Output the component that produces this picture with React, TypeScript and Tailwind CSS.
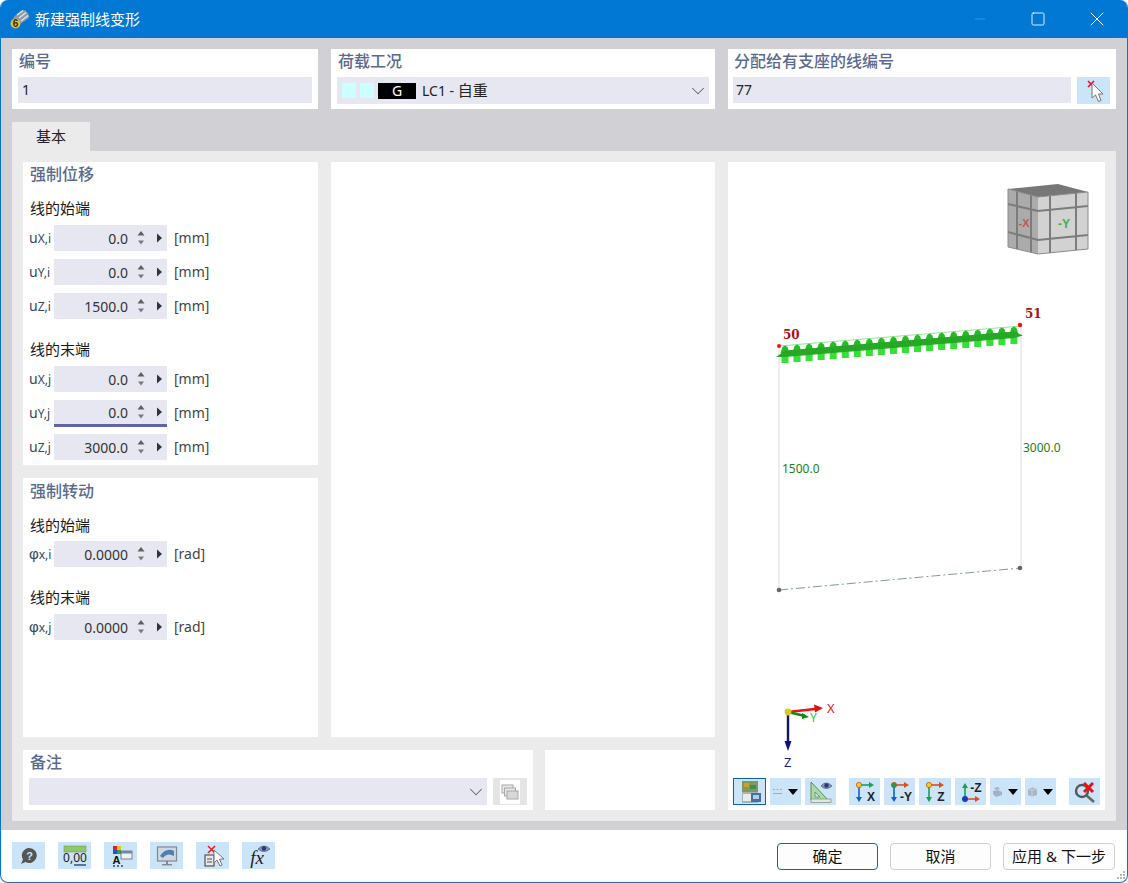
import type { ReactNode } from "react";
import { ChevronDown, Minus, Square, X } from "lucide-react";

const cardTitle = "h-6 leading-6 text-[16px] font-medium text-[#5a6a8e]";
const subTitle = "h-5 leading-5 text-[15px] text-[#1a1a1a]";

function Spinner() {
  return (
    <div className="flex items-center ml-auto shrink-0">
      <svg width="10" height="18" viewBox="0 0 10 18" className="mr-[10px]">
        <path d="M5 2 8.500 6.500 1.500 6.500Z" fill="#5f5f5f" />
        <path d="M5 15.500 8 11.500 2 11.500Z" fill="#7a7a7a" />
      </svg>
      <svg width="7" height="10" viewBox="0 0 7 10" className="mr-[4px] mb-[1px]">
        <path d="M1 0.500 6 5 1 9.500Z" fill="#333" />
      </svg>
    </div>
  );
}

function NumRow({
  sym,
  sub,
  value,
  unit,
  focused,
}: {
  sym: string;
  sub: string;
  value: string;
  unit: string;
  focused?: boolean;
}) {
  return (
    <div className="flex items-start h-[26px]">
      <div className="w-[25px] h-[26px] leading-[26px] text-[14px] text-[#33475f] whitespace-nowrap overflow-visible">
        <span className={sym === "φ" ? "font-['Liberation_Sans',sans-serif] text-[15px]" : ""}>{sym}</span>
        <span className="text-[12px]">{sub}</span>
      </div>
      <div
        className={`w-[113px] flex items-center bg-[#e6e7f1] ${
          focused ? "h-[27px] border-b-[3px] border-[#6264a7]" : "h-[26px]"
        }`}
      >
        <span className="w-[74px] text-right text-[14px] text-[#333] pt-[1px]">{value}</span>
        <Spinner />
      </div>
      <div className="ml-[7px] h-[26px] leading-[26px] text-[14px] text-[#444]">{unit}</div>
    </div>
  );
}

function Btn({ w, active, children }: { w: string; active?: boolean; children: ReactNode }) {
  return (
    <div
      className={`${w} h-[27px] shrink-0 flex items-center justify-center ${
        active ? "bg-[#cce4f7] border border-[#0a64a8]" : "bg-[#cce4f7]"
      }`}
    >
      {children}
    </div>
  );
}

function DropArrow() {
  return (
    <svg width="10" height="6" viewBox="0 0 10 6" className="ml-[6px]">
      <path d="M0 0H10L5 6Z" fill="#000" />
    </svg>
  );
}

function AxisIcon({
  top,
  arrow1,
  arrow2,
  label,
}: {
  top: string;
  arrow1: string;
  arrow2: string;
  label: string;
}) {
  return (
    <svg width="26" height="24" viewBox="0 0 26 24">
      <line x1="7" y1="5" x2="18" y2="5" stroke={arrow1} strokeWidth="1.600" />
      <path d="M17 2 22 5 17 8Z" fill={arrow1} />
      <line x1="7" y1="5" x2="7" y2="18" stroke={arrow2} strokeWidth="1.600" />
      <path d="M4 17 7 22 10 17Z" fill={arrow2} />
      <circle cx="7" cy="5" r="2.600" fill={top} stroke="#c05010" strokeWidth="0.800" />
      <text x="19" y="21" textAnchor="middle" fontSize="12" fontWeight="700" fontFamily="Liberation Sans Narrow, Liberation Sans" fill="#222">
        {label}
      </text>
    </svg>
  );
}

function ToolBar() {
  return (
    <div className="flex pl-[5px] h-[27px]">
      <Btn w="w-[33px]" active>
        <svg width="26" height="24" viewBox="0 0 26 24">
          <rect x="5" y="1" width="16" height="11" fill="#7f9a5a" />
          <rect x="7" y="3" width="5" height="4" fill="#c8a030" />
          <rect x="13" y="5" width="6" height="4" fill="#3f8f50" />
          <rect x="5" y="12" width="16" height="11" fill="#a9b0b8" />
          <rect x="6" y="14" width="14" height="7" fill="#e8ecef" />
          <rect x="14" y="13" width="10" height="9" fill="#3f6fa8" />
          <rect x="16" y="15" width="6" height="4" fill="#b7cbe0" />
        </svg>
      </Btn>
      <Btn w="w-[31px] ml-[4px]">
        <svg width="9" height="8" viewBox="0 0 9 8">
          <path d="M0 1.500H2M3.500 1.500H5.500M7 1.500H9" stroke="#e58aa8" strokeWidth="1" />
          <path d="M0 5.500H9" stroke="#e58aa8" strokeWidth="1" />
        </svg>
        <DropArrow />
      </Btn>
      <Btn w="w-[31px] ml-[4px]">
        <svg width="26" height="24" viewBox="0 0 26 24">
          <path d="M3 2 20 20H3Z" fill="#a8dca0" stroke="#5e8a60" strokeWidth="1" />
          <path d="M7 12 12 17H7Z" fill="#cce4f7" stroke="#5e8a60" strokeWidth="0.800" />
          <rect x="3" y="19" width="20" height="3.500" fill="#e2e6e0" stroke="#7c8a7c" strokeWidth="0.700" />
          <path d="M13 6Q18 0 24 6Q18 11 13 6Z" fill="#8098c8" stroke="#4a5470" strokeWidth="0.700" />
          <circle cx="18.500" cy="5.500" r="2.200" fill="#303a70" />
        </svg>
      </Btn>
      <Btn w="w-[31px] ml-[13px]">
        <AxisIcon top="#f5d020" arrow1="#1aa060" arrow2="#1560c8" label="X" />
      </Btn>
      <Btn w="w-[31px] ml-[4px]">
        <AxisIcon top="#18a050" arrow1="#d8501a" arrow2="#1560c8" label="-Y" />
      </Btn>
      <Btn w="w-[32px] ml-[4px]">
        <AxisIcon top="#f5d020" arrow1="#d8501a" arrow2="#18a050" label="Z" />
      </Btn>
      <Btn w="w-[31px] ml-[4px]">
        <svg width="26" height="24" viewBox="0 0 26 24">
          <line x1="7" y1="19" x2="7" y2="7" stroke="#18a050" strokeWidth="1.600" />
          <path d="M4 8 7 3 10 8Z" fill="#18a050" />
          <line x1="7" y1="19" x2="18" y2="19" stroke="#d8501a" strokeWidth="1.600" />
          <path d="M17 16 22 19 17 22Z" fill="#d8501a" />
          <circle cx="7" cy="19" r="3" fill="#1040c0" />
          <text x="18" y="12" textAnchor="middle" fontSize="12" fontWeight="700" fontFamily="Liberation Sans Narrow, Liberation Sans" fill="#222">
            -Z
          </text>
        </svg>
      </Btn>
      <Btn w="w-[31px] ml-[4px]">
        <svg width="9" height="10" viewBox="0 0 9 10">
          <path d="M1 1 5 0 7 2 3 3Z" fill="#a3b1c6" />
          <path d="M0 4 5 3 9 5 9 8 3 10 0 7Z" fill="#a3b1c6" />
        </svg>
        <DropArrow />
      </Btn>
      <Btn w="w-[31px] ml-[4px]">
        <svg width="9" height="10" viewBox="0 0 9 10">
          <path d="M0 2 5 0.500 9 2 9 8 4 9.500 0 8Z" fill="#aab4c6" />
          <path d="M4 3V9.500M0 2 4 3 9 2" stroke="#d5dce8" strokeWidth="0.700" fill="none" />
        </svg>
        <DropArrow />
      </Btn>
      <Btn w="w-[31px] ml-[13px]">
        <svg width="26" height="24" viewBox="0 0 26 24">
          <circle cx="10" cy="11" r="6" fill="none" stroke="#555" strokeWidth="2.400" />
          <path d="M14.500 15.500 22 22" stroke="#666" strokeWidth="2.600" />
          <path d="M12 3 21 12M21 3 12 12" stroke="#ee1111" strokeWidth="3" />
        </svg>
      </Btn>
    </div>
  );
}

function ModelView() {
  const arrows = Array.from({ length: 20 }, (_, i) => {
    const x = 785 + i * 12.05;
    return { x, y: 352 - (x - 785) * 0.083 };
  });
  return (
    <svg width="377" height="616" viewBox="728 162 377 616" className="block">
      {/* view cube */}
      <path d="M1008 189 1058 184 1088 192 1038 197Z" fill="#777777" />
      <path d="M1008 189 1038 197 1038 254 1008 247Z" fill="#ababab" />
      <path d="M1038 197 1088 192 1088 249 1038 254Z" fill="#d2d2d2" />
      <path
        d="M1008 204 1038 211 1088 206M1008 232 1038 240 1088 235M1017 191V249M1031 195V252M1050 196V253M1076 193V250"
        stroke="#7c7c7c"
        strokeWidth="2"
        fill="none"
      />
      <path d="M1008 189 1038 197 1088 192V249L1038 254 1008 247Z" stroke="#8a8a8a" strokeWidth="1" fill="none" />
      <text x="1024" y="227" textAnchor="middle" fontSize="11" fontWeight="700" fontFamily="Liberation Sans" fill="#c0555c">
        -X
      </text>
      <text x="1064" y="228" textAnchor="middle" fontSize="12" fontWeight="700" fontFamily="Liberation Sans" fill="#3fb04f">
        -Y
      </text>

      {/* supported line */}
      <line x1="779" y1="347" x2="779" y2="590" stroke="#dcdcdc" />
      <line x1="1021" y1="325" x2="1021" y2="568" stroke="#dcdcdc" />
      <line x1="779" y1="590" x2="1021" y2="568" stroke="#7f9f84" strokeDasharray="9 3 2 3" />
      <circle cx="779" cy="590" r="2.300" fill="#666" />
      <circle cx="1020" cy="568" r="2.300" fill="#666" />

      {/* imposed deformation load */}
      <line x1="779" y1="346" x2="1021" y2="326" stroke="#8cec8c" strokeWidth="1.200" />
      {arrows.map((a) => (
        <g key={a.x}>
          <rect x={a.x - 3.5} y={a.y} width="7" height="11" fill="#36e036" />
          <path d={`M${a.x - 4.5} ${a.y + 1} ${a.x - 2.5} ${a.y - 5} ${a.x} ${a.y - 6.5} ${a.x + 2.5} ${a.y - 5} ${a.x + 4.5} ${a.y + 1}Z`} fill="#28ba28" />
        </g>
      ))}
      <path d="M776 357 785 350.500 1014 331.500 1023 335.500 1014 338 785 357Z" fill="#26a826" />
      <circle cx="779" cy="346" r="2" fill="#ff1010" />
      <circle cx="1020" cy="325" r="2.200" fill="#ff1010" />
      <text x="783" y="339" fontSize="12" fontWeight="700" fontFamily="DejaVu Serif" fill="#b01010">
        50
      </text>
      <text x="1025" y="318" fontSize="12" fontWeight="700" fontFamily="DejaVu Serif" fill="#b01010">
        51
      </text>
      <text x="782" y="473" fontSize="12" fontFamily="Noto Sans" fill="#1a7f1a">
        1500.0
      </text>
      <text x="1023" y="452" fontSize="12" fontFamily="Noto Sans" fill="#1a7f1a">
        3000.0
      </text>

      {/* coordinate axes */}
      <line x1="788" y1="712" x2="788" y2="742" stroke="#10107f" strokeWidth="2.400" />
      <path d="M784.500 741 788 751 791.500 741Z" fill="#10107f" />
      <line x1="788" y1="712" x2="815" y2="709" stroke="#ee1111" strokeWidth="2.400" />
      <path d="M814 704.500 823 708 815 712.500Z" fill="#dd1111" />
      <line x1="788" y1="712" x2="805" y2="716" stroke="#108a10" strokeWidth="2.800" />
      <path d="M802 713 809 717 802 719Z" fill="#108a10" />
      <circle cx="788" cy="712" r="3.400" fill="#d8c820" />
      <text x="827" y="713" fontSize="13" fontFamily="Noto Sans" fill="#ee1111">
        X
      </text>
      <text x="810" y="722" fontSize="12" fontFamily="Noto Sans" fill="#22cc44">
        Y
      </text>
      <text x="784" y="767" fontSize="13" fontFamily="Noto Sans" fill="#1a1a80">
        Z
      </text>
    </svg>
  );
}

function FooterIcons() {
  return (
    <div className="flex gap-[13px]">
      <Btn w="w-[33px]">
        <svg width="22" height="22" viewBox="0 0 22 22">
          <path d="M11 3A7.500 7.500 0 1 1 7.500 17L3 19 5 14.500A7.500 7.500 0 0 1 11 3Z" fill="#555" />
          <text x="11.500" y="14.500" textAnchor="middle" fontSize="11" fontWeight="700" fontFamily="Liberation Sans" fill="#cce4f7">
            ?
          </text>
        </svg>
      </Btn>
      <Btn w="w-[33px]">
        <svg width="28" height="24" viewBox="0 0 28 24">
          <rect x="3" y="2" width="22" height="6" fill="#8fc86a" stroke="#6a9a50" strokeWidth="0.600" />
          <text x="14" y="18" textAnchor="middle" fontSize="12" fontFamily="Noto Sans" fill="#222">
            0,00
          </text>
          <line x1="13" y1="21" x2="25" y2="21" stroke="#2a4f90" strokeWidth="1.600" />
        </svg>
      </Btn>
      <Btn w="w-[33px]">
        <svg width="26" height="24" viewBox="0 0 26 24">
          <rect x="5" y="2" width="4" height="4" fill="#e02020" />
          <rect x="9" y="2" width="4" height="4" fill="#f0c020" />
          <rect x="5" y="6" width="4" height="4" fill="#2050d0" />
          <rect x="9" y="6" width="4" height="4" fill="#30a030" />
          <rect x="13" y="7" width="11" height="8" fill="#eef2f6" stroke="#667" strokeWidth="0.800" />
          <rect x="13" y="7" width="11" height="2.500" fill="#6f87a8" />
          <text x="8.500" y="20" textAnchor="middle" fontSize="11" fontWeight="700" fontFamily="Liberation Sans" fill="#111">
            A
          </text>
          <path d="M5 22H7M9 22H11M13 22H15" stroke="#444" strokeWidth="1.600" />
        </svg>
      </Btn>
      <Btn w="w-[33px]">
        <svg width="24" height="24" viewBox="0 0 24 24">
          <rect x="2.500" y="3" width="19" height="14" fill="#cfd8e2" stroke="#808890" strokeWidth="1.200" />
          <path d="M5 12Q11 3 19 7L19 12Q12 8 8 14Z" fill="#4f7eb5" />
          <rect x="11" y="17" width="2" height="3" fill="#808890" />
          <rect x="7" y="20" width="10" height="1.400" fill="#808890" />
        </svg>
      </Btn>
      <Btn w="w-[33px]">
        <svg width="26" height="24" viewBox="0 0 26 24">
          <path d="M8 2 15 9M15 2 8 9" stroke="#ee2222" strokeWidth="1.600" />
          <rect x="5" y="11" width="9" height="11" fill="#e8e8e8" stroke="#555" strokeWidth="1.200" />
          <path d="M7 15H12M7 18H12" stroke="#555" strokeWidth="1" />
          <path d="M14 6 14 19 17 16 20 22 22 21 19.500 15 24 15Z" fill="#fff" stroke="#777" strokeWidth="1" />
        </svg>
      </Btn>
      <Btn w="w-[33px]">
        <svg width="28" height="26" viewBox="0 0 28 26">
          <text x="12" y="21" textAnchor="middle" fontSize="19" fontStyle="italic" fontFamily="Liberation Serif" fill="#222">
            fx
          </text>
          <path d="M13 6Q19 0 25 6Q19 11 13 6Z" fill="#8098c8" stroke="#4a5470" strokeWidth="0.700" />
          <circle cx="19" cy="5.500" r="2.200" fill="#303a70" />
        </svg>
      </Btn>
    </div>
  );
}

export default function App() {
  return (
    <div className="w-[1128px] h-[883px] flex flex-col overflow-hidden rounded-lg border-x border-b border-[#0078d4] bg-white font-['Noto_Sans','Noto_Sans_CJK_SC',sans-serif]">
      {/* title bar */}
      <div className="h-[38px] shrink-0 -mx-px flex items-center bg-[#0078d4] text-white">
        <svg width="20" height="20" viewBox="0 0 20 20" className="ml-[10px]">
          <rect x="4" y="3.500" width="15" height="10" rx="3.500" fill="#8d99aa" transform="rotate(-35 11 8.500)" />
          <path d="M7 6 13 1.500M9 9 16 3.500M11 12 18 6.500" stroke="#e4e8ee" strokeWidth="1.300" />
          <circle cx="5.500" cy="14.500" r="5" fill="#dcbc40" />
          <text x="5.500" y="18" textAnchor="middle" fontSize="10" fontWeight="700" fontFamily="Liberation Sans" fill="#3a3010">
            6
          </text>
        </svg>
        <span className="ml-[5px] text-[15px]">新建强制线变形</span>
        <div className="ml-auto flex items-center">
          <Minus className="w-[16px] h-[16px] text-[#4aa3e4] mr-[42px]" strokeWidth={1} />
          <Square className="w-[16px] h-[16px] mr-[39px]" strokeWidth={1.3} />
          <X className="w-[24px] h-[24px] mr-[19px]" strokeWidth={1} />
        </div>
      </div>

      {/* dialog body */}
      <div className="h-[792px] shrink-0 bg-[#d1d0d5] pl-[11px] pr-[11px] pt-[11px]">
        <div className="flex gap-[13px] h-[60px]">
          <div className="w-[306px] bg-white px-[6px]">
            <div className={`${cardTitle} pl-[1px]`}>编号</div>
            <div className="mt-[4px] h-[26px] leading-[26px] bg-[#e6e7f1] pl-[4px] text-[14px] text-[#222]">1</div>
          </div>
          <div className="w-[384px] bg-white px-[6px]">
            <div className={`${cardTitle} pl-[1px]`}>荷载工况</div>
            <div className="mt-[4px] h-[27px] flex items-center bg-[#e6e7f1] pl-[5px] text-[14px] text-[#222]">
              <span className="w-[14px] h-[15px] bg-[#ccffff]" />
              <span className="w-[14px] h-[15px] bg-[#ccffff] ml-[4px]" />
              <span className="w-[38px] h-[16px] leading-[16px] bg-black text-white text-center ml-[4px] text-[14px]">G</span>
              <span className="ml-[6px]">
                LC1 - <span className="text-[15px]">自重</span>
              </span>
              <ChevronDown className="ml-auto w-[22px] h-[22px] text-[#666]" strokeWidth={1.1} />
            </div>
          </div>
          <div className="flex-1 bg-white pl-[5px] pr-[6px]">
            <div className={`${cardTitle} pl-[1px]`}>分配给有支座的线编号</div>
            <div className="mt-[4px] flex gap-[6px]">
              <div className="flex-1 h-[26px] leading-[26px] bg-[#e6e7f1] pl-[3px] text-[14px] text-[#222]">77</div>
              <div className="w-[33px] h-[27px] bg-[#cce4f7] flex items-center justify-center">
                <svg width="24" height="24" viewBox="0 0 24 24">
                  <path d="M6 2 12 8M12 2 6 8" stroke="#ee1122" strokeWidth="1.600" />
                  <path d="M10 4 10 19 13.500 16 16.500 22.500 19 21.500 16.500 15 21 15Z" fill="#fff" stroke="#777" strokeWidth="1" />
                </svg>
              </div>
            </div>
          </div>
        </div>

        <div className="mt-[13px] w-[78px] h-[29px] leading-[28px] bg-[#ebebeb] text-center text-[15px] text-[#222]">基本</div>

        <div className="h-[670px] bg-[#ebebeb] flex gap-[13px] pl-[11px] pr-[11px] pt-[11px]">
          <div className="w-[692px] flex flex-col gap-[13px]">
            <div className="flex gap-[13px] h-[575px]">
              <div className="w-[295px] flex flex-col gap-[13px]">
                <div className="h-[303px] bg-white pl-[6px]">
                  <div className={`${cardTitle} pl-[1px]`}>强制位移</div>
                  <div className={`${subTitle} mt-[12px] pl-[1px]`}>线的始端</div>
                  <div className="mt-[7px] flex flex-col gap-[8px]">
                    <NumRow sym="u" sub="X,i" value="0.0" unit="[mm]" />
                    <NumRow sym="u" sub="Y,i" value="0.0" unit="[mm]" />
                    <NumRow sym="u" sub="Z,i" value="1500.0" unit="[mm]" />
                  </div>
                  <div className={`${subTitle} mt-[20px] pl-[1px]`}>线的末端</div>
                  <div className="mt-[7px] flex flex-col gap-[8px]">
                    <NumRow sym="u" sub="X,j" value="0.0" unit="[mm]" />
                    <NumRow sym="u" sub="Y,j" value="0.0" unit="[mm]" focused />
                    <NumRow sym="u" sub="Z,j" value="3000.0" unit="[mm]" />
                  </div>
                </div>
                <div className="flex-1 bg-white pl-[6px] pt-[1px]">
                  <div className={`${cardTitle} pl-[1px]`}>强制转动</div>
                  <div className={`${subTitle} mt-[12px] pl-[1px]`}>线的始端</div>
                  <div className="mt-[6px]">
                    <NumRow sym="φ" sub="x,i" value="0.0000" unit="[rad]" />
                  </div>
                  <div className={`${subTitle} mt-[20px] pl-[1px]`}>线的末端</div>
                  <div className="mt-[7px]">
                    <NumRow sym="φ" sub="x,j" value="0.0000" unit="[rad]" />
                  </div>
                </div>
              </div>
              <div className="w-[384px] bg-white" />
            </div>
            <div className="flex gap-[12px] h-[60px]">
              <div className="w-[510px] bg-white px-[6px]">
                <div className={`${cardTitle} pl-[1px]`}>备注</div>
                <div className="mt-[4px] flex gap-[6px]">
                  <div className="w-[458px] h-[27px] bg-[#e6e7f1] flex items-center justify-end">
                    <ChevronDown className="w-[22px] h-[22px] text-[#666]" strokeWidth={1.1} />
                  </div>
                  <div className="w-[34px] h-[27px] bg-[#e5e5e5] flex items-center justify-center">
                    <svg width="20" height="24" viewBox="0 0 20 24">
                      <rect x="0" y="0" width="20" height="24" fill="#fdfdfd" />
                      <rect x="2" y="5" width="11" height="8" fill="#e8e8e8" stroke="#a8a8a8" />
                      <rect x="4.500" y="8" width="11" height="8" fill="#e8e8e8" stroke="#a8a8a8" />
                      <rect x="7" y="11" width="11" height="8" fill="#d8d8d8" stroke="#a8a8a8" />
                    </svg>
                  </div>
                </div>
              </div>
              <div className="w-[170px] bg-white" />
            </div>
          </div>
          <div className="w-[377px] h-[648px] bg-white flex flex-col">
            <ModelView />
            <ToolBar />
          </div>
        </div>
      </div>

      {/* footer */}
      <div className="relative flex-1 flex items-start justify-between pl-[11px] pr-[12px] pt-[12px]">
        <FooterIcons />
        <div className="flex gap-[12px] pt-[1px] text-[15px] text-[#111]">
          <button type="button" className="w-[101px] h-[27px] rounded-[4px] border border-[#0067c0] bg-[#fdfdfd]">
            确定
          </button>
          <button type="button" className="w-[101px] h-[27px] rounded-[4px] border border-[#cfcfcf] bg-[#fdfdfd]">
            取消
          </button>
          <button type="button" className="w-[112px] h-[27px] rounded-[4px] border border-[#cfcfcf] bg-[#fdfdfd]">
            应用 &amp; 下一步
          </button>
        </div>
        <svg width="10" height="10" viewBox="0 0 10 10" className="absolute right-[1px] bottom-[2px]">
          <path d="M7 1H9V3H7ZM4 4H6V6H4ZM7 4H9V6H7ZM1 7H3V9H1ZM4 7H6V9H4ZM7 7H9V9H7Z" fill="#b5b5b5" />
        </svg>
      </div>
    </div>
  );
}
